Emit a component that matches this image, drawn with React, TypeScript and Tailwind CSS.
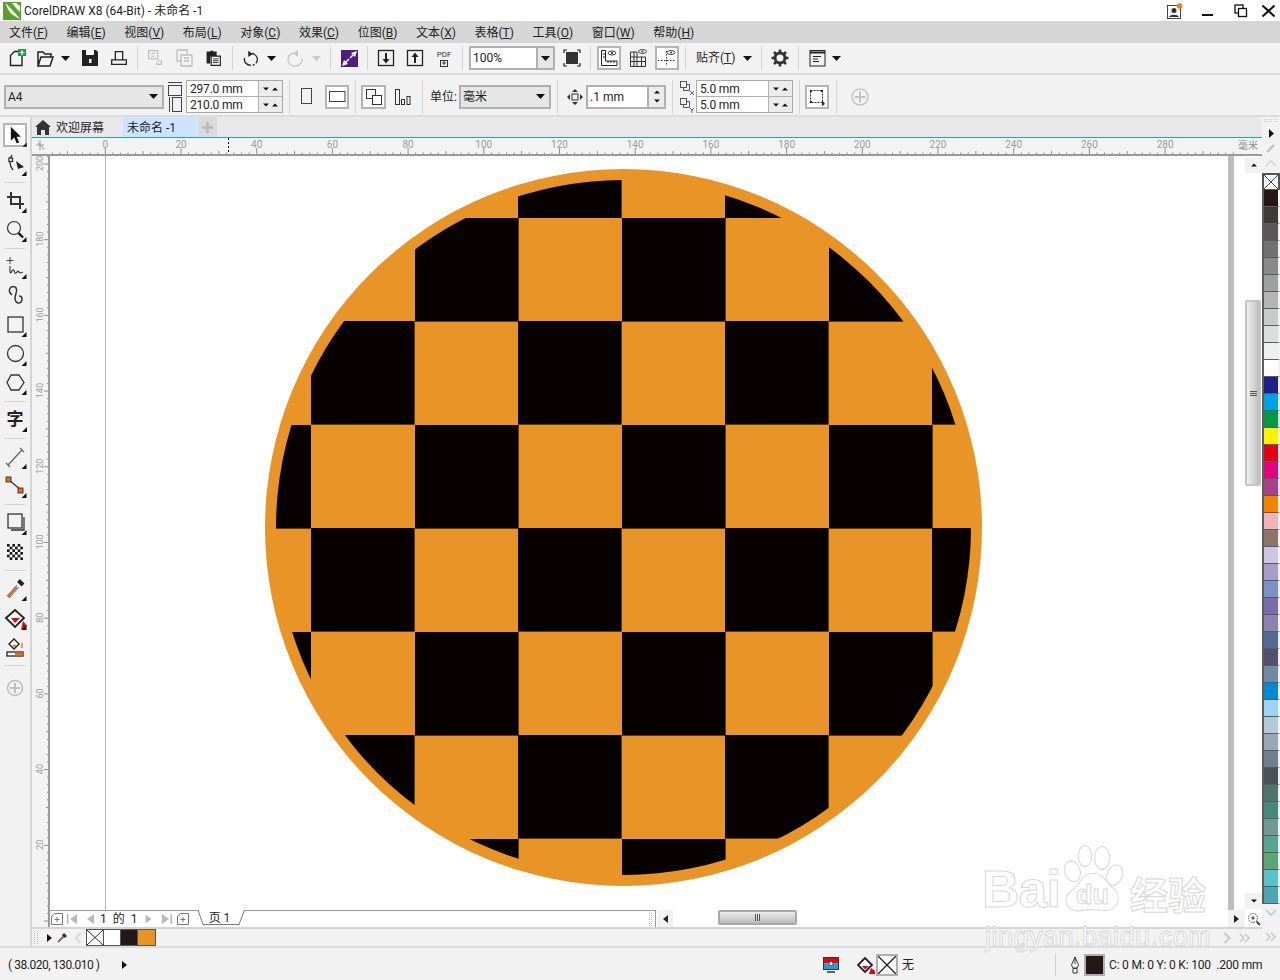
import React from "react";

const FONT = "[font-family:'Roboto','Noto_Sans_CJK_SC',sans-serif]";

const menus = [
  ["文件", "F"],
  ["编辑", "E"],
  ["视图", "V"],
  ["布局", "L"],
  ["对象", "C"],
  ["效果", "C"],
  ["位图", "B"],
  ["文本", "X"],
  ["表格", "T"],
  ["工具", "O"],
  ["窗口", "W"],
  ["帮助", "H"],
];

const palette = [
  "#231815", "#3e3a39", "#595757", "#727171", "#898989", "#9fa0a0", "#b5b5b6", "#c9caca",
  "#dcdddd", "#efefef", "#ffffff", "#1d2088", "#00a0e9", "#009944", "#fff100", "#e60012",
  "#e4007f", "#a84089", "#f08300", "#f5b2b2", "#8c7568", "#ccc7e3", "#a79dc9", "#7a92c8",
  "#7a6ab0", "#8c82ad", "#4f6a94", "#554f6f", "#708aa5", "#0089d4", "#9bd4f5", "#b3c9d7",
  "#98a9b3", "#70808a", "#4a5258", "#4d7570", "#44897b", "#6e9a92", "#55a593", "#5ba673",
  "#5bc0ce", "#4ba7b3",
];

const ORANGE = "#e89427";
const BLACK = "#060001";
const colsX = [311, 415, 518, 622, 725, 829, 932];
const rowsY = [218, 321, 425, 528, 632, 735, 839];

// checker squares, clipped by the inner circle
function Board() {
  const squares: React.ReactNode[] = [];
  for (let r = -1; r < 8; r++) {
    for (let c = -1; c < 8; c++) {
      if ((r + c + 200) % 2 !== 1) continue;
      const x = c < 0 ? 208 : colsX[c];
      const y = r < 0 ? 114 : rowsY[r];
      squares.push(<rect key={`${r}-${c}`} x={x} y={y} width={c < 0 ? 103 : 103.6} height={r < 0 ? 104 : 103.6} fill={BLACK} />);
    }
  }
  return (
    <svg viewBox="50 156 1178 754" className="absolute inset-0 h-[754px] w-[1178px]">
      <line x1="105.5" y1="156" x2="105.5" y2="910" stroke="#b4b4b4" />
      <circle cx="623.5" cy="527.5" r="358.5" fill={ORANGE} />
      <clipPath id="inner">
        <circle cx="623.5" cy="527.5" r="347.5" />
      </clipPath>
      <g clipPath="url(#inner)">{squares}</g>
    </svg>
  );
}

function Cross({ w = 1 }: { w?: number }) {
  return (
    <svg viewBox="0 0 16 16" preserveAspectRatio="none" className="h-full w-full" stroke="#222" strokeWidth={w}>
      <path d="M0 0 L16 16 M16 0 L0 16" />
    </svg>
  );
}

function Caret({ up, color = "#111", className = "" }: { up?: boolean; color?: string; className?: string }) {
  return (
    <svg width="9" height="5" viewBox="0 0 9 5" className={className}>
      <path d={up ? "M0 5 L4.5 0 L9 5 Z" : "M0 0 L9 0 L4.5 5 Z"} fill={color} />
    </svg>
  );
}

function Tiny({ up }: { up?: boolean }) {
  return (
    <svg width="6" height="4" viewBox="0 0 6 4">
      <path d={up ? "M0 3.5 L3 0.5 L6 3.5 Z" : "M0 0.5 L6 0.5 L3 3.5 Z"} fill="#111" />
    </svg>
  );
}

function Slot({ className, children }: { className: string; children?: React.ReactNode }) {
  return <div className={`flex h-full shrink-0 items-center justify-center ${className}`}>{children}</div>;
}

function Sep({ className, tall }: { className: string; tall?: boolean }) {
  return (
    <div className={`flex h-full shrink-0 items-center justify-center ${className}`}>
      <div className={`w-px bg-[#d4d4d4] ${tall ? "h-[34px]" : "h-[24px]"}`} />
    </div>
  );
}

function Ico({ children, size = 24 }: { children: React.ReactNode; size?: number }) {
  return (
    <svg width={size} height={size} viewBox="0 0 24 24" fill="none" stroke="#222" strokeWidth="1.3">
      {children}
    </svg>
  );
}

function Boxed({ className, children }: { className: string; children: React.ReactNode }) {
  return (
    <div className={`flex h-[24px] shrink-0 items-center justify-center border-2 border-[#b4b4b4] bg-white ${className}`}>
      {children}
    </div>
  );
}

function Combo({ className, text }: { className: string; text: string }) {
  return (
    <div className={`flex h-[24px] shrink-0 items-center justify-between border-2 border-[#b0b0b0] bg-[#e6e6e6] pl-[2px] pr-[4px] text-[12px] text-[#222] ${className}`}>
      <span>{text}</span>
      <Caret />
    </div>
  );
}

function DoubleInput({ a, b }: { a: string; b: string }) {
  const row = (v: string) => (
    <div className="flex h-[16px]">
      <div className="flex w-[71px] items-center bg-white pl-[3px] text-[12px] leading-none tracking-[-0.2px] text-[#222]">{v}</div>
      <div className="flex flex-1 items-center justify-around border-l border-[#b0b0b0] bg-[#ececec] px-[3px]">
        <Tiny />
        <Tiny up />
      </div>
    </div>
  );
  return (
    <div className="flex h-[33px] w-[97px] shrink-0 flex-col gap-px border border-[#a8a8a8] bg-[#b0b0b0]">
      {row(a)}
      {row(b)}
    </div>
  );
}

function Tool({ children, corner, className = "" }: { children: React.ReactNode; corner?: boolean; className?: string }) {
  return (
    <div className={`relative flex h-[29px] items-center justify-center ${className}`}>
      <svg width="24" height="24" viewBox="0 0 24 24" fill="none" stroke="#333" strokeWidth="1.3">
        {children}
        {corner && <path d="M23.5 19 V24 H18.5 Z" fill="#111" stroke="none" />}
      </svg>
    </div>
  );
}

function ToolSep() {
  return (
    <div className="flex h-[8px] items-center justify-center">
      <div className="h-px w-[22px] bg-[#d4d4d4]" />
    </div>
  );
}

function Checker() {
  const cells: React.ReactNode[] = [];
  for (let r = 0; r < 6; r++) {
    for (let c = 0; c < 6; c++) {
      if ((r + c) % 2 === 1) cells.push(<rect key={`${r}${c}`} x={4 + c * 2.67} y={4 + r * 2.67} width="2.67" height="2.67" fill="#fff" stroke="none" />);
    }
  }
  return (
    <>
      <rect x="4" y="4" width="16" height="16" fill="#1a1a1a" stroke="none" />
      {cells}
    </>
  );
}

function Toolbox() {
  return (
    <div className="flex h-full w-[32px] shrink-0 flex-col border-r-2 border-[#d4d4d4] pt-[3px]">
      <div className="relative flex h-[29px] items-center justify-center">
        <div className="flex h-[24px] w-[24px] items-center justify-center border-2 border-[#b4b4b4] bg-white">
          <svg width="20" height="20" viewBox="0 0 24 24" className="overflow-visible">
            <path d="M7 2 L7 19 L11 15 L14 22 L17 21 L14 14 L19 14 Z" fill="#111" />
            <path d="M26 21 V26 H21 Z" fill="#111" />
          </svg>
        </div>
      </div>
      <Tool corner>
        <path d="M9 3 C6 7 6 13 10 18" />
        <rect x="6" y="6" width="3.5" height="3.5" fill="#fff" />
        <path d="M13 9 L21 15 L15 17 Z" fill="#222" stroke="none" />
      </Tool>
      <ToolSep />
      <Tool corner>
        <path d="M4 8 H17 V20 M8 3 V15 H21" strokeWidth="2" />
      </Tool>
      <Tool corner>
        <circle cx="11" cy="10" r="6.5" strokeWidth="1.2" />
        <path d="M15.5 15 L20 19.5" strokeWidth="2.4" stroke="#111" />
      </Tool>
      <ToolSep />
      <Tool corner>
        <path d="M7 2 V9 M3.5 5.5 H10.5" strokeWidth="0.9" />
        <path d="M7 11 V17 C8 20 9 14 10.5 15 S11 19 13 18 S14 15 16 17 S18 18 20 17" strokeWidth="1.1" />
      </Tool>
      <Tool>
        <path d="M9 11 C4 7 7 1 12 3 C16 5 12 10 12 14 C12 20 19 21 19 15 C19 13 18 12 16 12" strokeWidth="1.5" />
      </Tool>
      <Tool corner>
        <rect x="5" y="4" width="15" height="15" strokeWidth="1.3" />
      </Tool>
      <Tool corner>
        <circle cx="12.5" cy="11.5" r="8" strokeWidth="1.3" />
      </Tool>
      <Tool corner>
        <path d="M8 4 H16 L21 11.5 L16 19 H8 L4 11.5 Z" strokeWidth="1.3" />
      </Tool>
      <ToolSep />
      <div className="relative flex h-[29px] items-center justify-center text-[17px] font-bold leading-none text-[#222]">
        字
        <svg width="5" height="5" viewBox="0 0 5 5" className="absolute bottom-[2px] right-[3px]">
          <path d="M5 0 V5 H0 Z" fill="#111" />
        </svg>
      </div>
      <ToolSep />
      <Tool corner>
        <path d="M5 20 L19 5" stroke="#666" />
        <path d="M3 18 L7 22 M17 3 L21 7" stroke="#666" />
      </Tool>
      <Tool corner>
        <path d="M6 6 L18 16" stroke="#333" />
        <rect x="3" y="3" width="5" height="5" fill="#f26a11" stroke="#222" strokeWidth="0.8" />
        <rect x="15" y="14" width="5" height="5" fill="#f26a11" stroke="#222" strokeWidth="0.8" />
      </Tool>
      <ToolSep />
      <Tool corner>
        <rect x="5" y="3" width="14" height="14" strokeWidth="1.3" />
        <path d="M21 6 V19 H8" strokeWidth="1.3" />
      </Tool>
      <Tool>
        <Checker />
      </Tool>
      <ToolSep />
      <Tool corner>
        <path d="M15.5 3.5 L20 8" stroke="#222" strokeWidth="4" />
        <path d="M5 20 L14 10" stroke="#e36c1a" strokeWidth="2.2" />
        <path d="M4 19 L14 8 M6 21 L16 10" stroke="#444" strokeWidth="0.7" />
      </Tool>
      <Tool corner>
        <path d="M3 12 L12 4 L21 12 L12 21 Z" fill="#fff" strokeWidth="1.8" stroke="#222" />
        <path d="M8 12 H17 L12 17 Z" fill="#e60012" stroke="none" />
        <path d="M20 15 L24 20 L18 24 Z" fill="#e60012" stroke="none" />
      </Tool>
      <Tool>
        <path d="M6 9 L11 4 L16 9 L11 14 Z" fill="#fff" strokeWidth="1.4" stroke="#222" />
        <path d="M9 10 H14 L11.5 12.5 Z" fill="#e36c1a" stroke="none" />
        <path d="M19 8 V13" stroke="#e36c1a" />
        <rect x="4" y="17" width="16" height="4" fill="#fff" stroke="#222" />
        <rect x="12" y="17.5" width="8" height="3" fill="#e36c1a" stroke="none" />
      </Tool>
      <ToolSep />
      <Tool className="mt-[4px]">
        <circle cx="12" cy="12" r="7.5" stroke="#bdbdbd" strokeWidth="1.6" />
        <path d="M12 7 V17 M7 12 H17" stroke="#bdbdbd" strokeWidth="2" />
      </Tool>
    </div>
  );
}

function TopRuler() {
  const marks: React.ReactNode[] = [];
  for (let v = -14; v <= 300; v += 2) {
    const x = 105.3 + 3.785 * v;
    if (x > 1238) break;
    if (v % 20 === 0) {
      marks.push(<line key={v} x1={x} x2={x} y1="148" y2="154" stroke="#8f8f8f" />);
      marks.push(<text key={`t${v}`} x={x} y="148" textAnchor="middle" fontSize="10" fill="#9c9c9c">{v}</text>);
    } else {
      marks.push(<line key={v} x1={x} x2={x} y1={v % 10 === 0 ? 151 : 152.5} y2="154" stroke="#8f8f8f" />);
    }
  }
  return (
    <div className="relative h-[18px] border-b-2 border-[#9a9a9a] bg-[#f3f3f3]">
      <svg viewBox="32 138 1230 16" className="absolute left-0 top-0 h-[16px] w-[1230px]">
        <path d="M40 140 V150 M36 145 H44 M38 143 L44 149" stroke="#999" fill="none" />
        {marks}
        <line x1="228.5" x2="228.5" y1="138" y2="154" stroke="#111" strokeDasharray="2 2" />
        <text x="1248" y="149" textAnchor="middle" fontSize="10" fill="#8f8f8f">毫米</text>
      </svg>
    </div>
  );
}

function LeftRuler() {
  const marks: React.ReactNode[] = [];
  for (let v = 0; v <= 202; v += 2) {
    const y = 921 - 3.785 * v;
    if (v % 20 === 0) {
      marks.push(<line key={v} y1={y} y2={y} x1="44" x2="49" stroke="#8f8f8f" />);
      if (v > 0)
        marks.push(
          <text key={`t${v}`} x="43" y={y - 0.5} transform={`rotate(-90 43 ${y - 0.5})`} textAnchor="middle" fontSize="9" fill="#9c9c9c">
            {v}
          </text>,
        );
    } else {
      marks.push(<line key={v} y1={y} y2={y} x1={v % 10 === 0 ? 46 : 47} x2="48" stroke="#8f8f8f" />);
    }
  }
  return (
    <div className="h-full w-[18px] shrink-0 border-r-2 border-[#9a9a9a] bg-[#f3f3f3]">
      <svg viewBox="32 156 16 771" className="h-[771px] w-[16px]">
        {marks}
      </svg>
    </div>
  );
}

function NavBtn({ d, color = "#b9b9b9" }: { d: string; color?: string }) {
  return (
    <svg width="14" height="14" viewBox="0 0 14 14">
      <path d={d} fill={color} />
    </svg>
  );
}

function AddPage() {
  return (
    <svg width="14" height="14" viewBox="0 0 14 14" fill="none" stroke="#777">
      <path d="M4.5 1.5 H12.5 V12.5 H1.5 V4.5 Z" />
      <path d="M7 5 V10 M4.5 7.5 H9.5" />
    </svg>
  );
}

function Scroller() {
  return (
    <div className="flex h-full w-[17px] shrink-0 flex-col pt-px">
      <div className="flex h-[16px] items-center justify-center bg-[#f2f2f2]">
        <Tiny up />
      </div>
      <div className="mt-[127px] flex h-[186px] w-[16px] items-center justify-center rounded-[2px] border-2 border-[#c4c4c4] bg-gradient-to-r from-[#f0f0f0] to-[#bdbdbd]">
        <div className="flex w-[7px] flex-col gap-px">
          <div className="h-px bg-[#555]" />
          <div className="h-px bg-[#555]" />
          <div className="h-px bg-[#555]" />
        </div>
      </div>
      <div className="mb-px mt-auto flex h-[16px] items-center justify-center bg-[#f2f2f2]">
        <Tiny />
      </div>
    </div>
  );
}

function PageNav() {
  return (
    <div className="flex h-[17px] bg-white text-[12px] leading-none text-[#222]">
      <div className="flex w-[606px] shrink-0 items-center border-r border-t border-[#9a9a9a]">
        <div className="flex w-[14px] shrink-0 items-center justify-center"><AddPage /></div>
        <Slot className="w-[16px]"><NavBtn d="M2 2 H3.5 V12 H2 Z M12 2 V12 L5 7 Z" /></Slot>
        <Slot className="ml-[1px] w-[17px]"><NavBtn d="M11 2 V12 L4 7 Z" /></Slot>
        <span className="ml-[2px] w-[37px] shrink-0 whitespace-nowrap [word-spacing:3px]">1 的 1</span>
        <Slot className="ml-[6px] w-[12px]"><NavBtn d="M3 2 V12 L10 7 Z" /></Slot>
        <Slot className="ml-[3px] w-[17px]"><NavBtn d="M2 2 V12 L9 7 Z M10.5 2 H12 V12 H10.5 Z" /></Slot>
        <div className="flex w-[15px] shrink-0 items-center justify-center"><AddPage /></div>
        <div className="relative ml-[8px] flex h-full w-[47px] shrink-0 items-center justify-center pr-[4px]">
          <svg width="47" height="16" viewBox="0 0 47 16" className="absolute left-0 top-[-1px]">
            <path d="M0 0 L5 14.5 H41 L46.5 0" fill="#fff" stroke="#777" />
          </svg>
          <span className="relative -mt-[2px]">页 1</span>
        </div>
        <div className="ml-auto mr-[3px] h-[13px] w-[3px] border-x border-dotted border-[#bbb]" />
      </div>
      <div className="ml-px flex w-[16px] shrink-0 items-center justify-center bg-[#f2f2f2]">
        <svg width="5" height="8" viewBox="0 0 5 8"><path d="M5 0 V8 L0 4 Z" fill="#222" /></svg>
      </div>
      <div className="ml-[45px] flex h-[15px] w-[79px] shrink-0 items-center justify-center rounded-[2px] border-2 border-[#a8a8a8] bg-gradient-to-b from-[#ececec] to-[#bcbcbc]">
        <div className="flex h-[7px] gap-px">
          <div className="w-px bg-[#555]" />
          <div className="w-px bg-[#555]" />
          <div className="w-px bg-[#555]" />
        </div>
      </div>
      <div className="ml-auto flex w-[17px] shrink-0 items-center justify-center bg-[#f2f2f2]">
        <svg width="5" height="8" viewBox="0 0 5 8"><path d="M0 0 V8 L5 4 Z" fill="#222" /></svg>
      </div>
      <div className="flex w-[17px] shrink-0 items-center justify-center">
        <svg width="14" height="14" viewBox="0 0 14 14" fill="none" stroke="#444">
          <circle cx="6" cy="6" r="4.5" strokeDasharray="1.5 1" />
          <path d="M9.5 9.5 L13 13" strokeWidth="2" />
          <path d="M6 4 V8 M4 6 H8" />
        </svg>
      </div>
    </div>
  );
}

function DocPalette() {
  return (
    <div className="flex h-[19px] items-center border-t-2 border-[#d4d4d4] bg-[#f2f2f2]">
      <div className="ml-[2px] h-[13px] w-[4px] border-x border-dotted border-[#bbb]" />
      <svg width="5" height="8" viewBox="0 0 5 8" className="ml-[9px]"><path d="M0 0 V8 L5 4 Z" fill="#111" /></svg>
      <svg width="10" height="10" viewBox="0 0 10 10" className="ml-[5px]">
        <path d="M7 3 L1 9" stroke="#8a6a50" strokeWidth="2" />
        <path d="M6 1 L9 4" stroke="#333" strokeWidth="3" />
      </svg>
      <svg width="8" height="12" viewBox="0 0 8 12" fill="none" className="ml-[7px]"><path d="M6.5 1 L1.5 6 L6.5 11" stroke="#d8d8d8" strokeWidth="2" /></svg>
      <div className="ml-[4px] flex h-[17px] border border-[#555]">
        <div className="w-[17px] border-r border-[#555] bg-white"><Cross /></div>
        <div className="w-[17px] border-r border-[#555] bg-white" />
        <div className="w-[17px] border-r border-[#555] bg-[#231815]" />
        <div className="w-[17px] bg-[#e89423]" />
      </div>
      <svg width="8" height="12" viewBox="0 0 8 12" fill="none" className="ml-auto"><path d="M1.5 1 L6.5 6 L1.5 11" stroke="#c8c8c8" strokeWidth="2" /></svg>
      <svg width="12" height="12" viewBox="0 0 12 12" fill="none" className="ml-[8px] mr-[11px]"><path d="M1 2 L5 6 L1 10 M6 2 L10 6 L6 10" stroke="#c8c8c8" strokeWidth="1.5" /></svg>
    </div>
  );
}

function Palette() {
  return (
    <div className="flex h-full w-[18px] shrink-0 flex-col items-center bg-[#f2f2f2]">
      <div className="mt-[2px] h-[3px] w-[14px] border-y border-dotted border-[#ccc]" />
      <svg width="5" height="9" viewBox="0 0 5 9" className="mt-[7px]"><path d="M0 0 V9 L5 4.5 Z" fill="#111" /></svg>
      <svg width="10" height="10" viewBox="0 0 10 10" className="mt-[5px]"><path d="M1 9 L8 2" stroke="#c4c4c4" strokeWidth="2.4" /></svg>
      <svg width="12" height="8" viewBox="0 0 12 8" fill="none" className="mt-[6px]"><path d="M1 7 L6 2 L11 7" stroke="#dcdcdc" strokeWidth="2" /></svg>
      <div className="mt-[6px] h-[17px] w-[18px] shrink-0 border-2 border-b border-[#555] bg-white">
        <Cross />
      </div>
      {palette.map((c) => (
        <div key={c} className="h-[17px] w-[18px] shrink-0 border-x-2 border-b border-[#5c5c5c] border-r-[#f2f2f2]" style={{ backgroundColor: c }} />
      ))}
      <svg width="12" height="8" viewBox="0 0 12 8" fill="none" className="mt-[5px]"><path d="M1 1 L6 6 L11 1" stroke="#c8d0d8" strokeWidth="2" /></svg>
      <svg width="12" height="12" viewBox="0 0 12 12" fill="none" className="mt-[14px]"><path d="M1 2 L5 6 L1 10 M6 2 L10 6 L6 10" stroke="#c8c8c8" strokeWidth="1.5" /></svg>
    </div>
  );
}

function Watermark() {
  return (
    <div className="pointer-events-none absolute left-[975px] top-[835px] h-[120px] w-[245px] font-bold text-white [font-family:'Liberation_Sans','Noto_Sans_CJK_SC',sans-serif] [-webkit-text-stroke:1px_#d8d8d8]">
      <span className="absolute left-[7px] top-[26px] text-[52px] leading-[56px] tracking-[-1px]">Bai</span>
      <svg width="67" height="72" viewBox="0 0 70 72" className="absolute left-[85px] top-[8px]" fill="#fff" stroke="#dcdcdc" strokeWidth="1.2">
        <ellipse cx="13" cy="28" rx="8" ry="11" transform="rotate(-20 13 28)" />
        <ellipse cx="26" cy="12" rx="7" ry="11" />
        <ellipse cx="44" cy="14" rx="8" ry="12" />
        <ellipse cx="57" cy="32" rx="8" ry="11" transform="rotate(20 57 32)" />
        <path d="M35 30 C46 30 48 40 56 46 C66 54 60 70 47 69 C38 68 30 67 22 69 C8 71 0 58 12 48 C22 42 22 30 35 30 Z" />
      </svg>
      <span className="absolute left-[101px] top-[44px] text-[27px] leading-[32px]">du</span>
      <span className="absolute left-[155px] top-[37px] text-[38px] leading-[48px]">经验</span>
      <span className="absolute left-[10px] top-[87px] whitespace-nowrap text-[27px] font-normal leading-[30px] tracking-[0.5px]">jingyan.baidu.com</span>
    </div>
  );
}

export default function App() {
  return (
    <div className={`relative flex h-[980px] w-[1280px] flex-col overflow-hidden bg-[#f2f2f2] text-[#222] ${FONT}`}>
      {/* title */}
      <div className="flex h-[21px] items-center bg-white text-[12px]">
        <svg width="18" height="18" viewBox="0 0 18 18" className="ml-[3px]">
          <rect width="18" height="18" fill="#5aa02c" />
          <path d="M3 1 C6 5 11 9 17 17 C10 14 4 9 3 1 Z M9 1 C11 4 14 7 17 10 V4 L13 1 Z" fill="#fff" />
        </svg>
        <span className="ml-[3px]">CorelDRAW X8 (64-Bit) - 未命名 -1</span>
        <svg width="16" height="16" viewBox="0 0 16 16" className="ml-auto">
          <rect x="0.5" y="2.5" width="13" height="13" fill="#fff" stroke="#444" />
          <circle cx="7" cy="7.5" r="2.5" fill="#333" />
          <path d="M2 14 C3 11 11 11 12 14 Z" fill="#333" />
          <circle cx="12.5" cy="3" r="2.8" fill="#f57b20" />
        </svg>
        <div className="ml-[19px] mt-[8px] h-[2px] w-[11px] bg-[#111]" />
        <svg width="14" height="14" viewBox="0 0 14 14" fill="#fff" stroke="#111" strokeWidth="1.3" className="ml-[21px]">
          <rect x="1" y="1" width="8" height="8" />
          <rect x="4.5" y="4.5" width="8" height="8" />
        </svg>
        <svg width="13" height="12" viewBox="0 0 13 12" stroke="#111" strokeWidth="2" className="ml-[14px] mr-[5px]">
          <path d="M0.5 0.5 L12.5 11.5 M12.5 0.5 L0.5 11.5" />
        </svg>
      </div>

      {/* menu */}
      <div className="flex h-[22px] items-center gap-[18.6px] bg-[#d6d6d6] pl-[9px] pt-[1px] text-[12px]">
        {menus.map(([t, k]) => (
          <span key={t} className="whitespace-nowrap">
            {t}(<u>{k}</u>)
          </span>
        ))}
      </div>

      {/* standard toolbar */}
      <div className="flex h-[32px] items-center border-b-2 border-[#dcdcdc] pl-[2px]">
        <Slot className="w-[28px]">
          <Ico>
            <path d="M10.5 5.5 H18 V19.5 H6.5 V9.5 Z" strokeWidth="1.4" />
            <rect x="14" y="3" width="8" height="7" fill="#1a9c3e" stroke="none" />
            <path d="M18 4 V9 M15.5 6.5 H20.5" stroke="#fff" strokeWidth="1.2" />
          </Ico>
        </Slot>
        <Slot className="w-[29px]">
          <Ico>
            <path d="M5 20 V6 H10 L12 8 H18 V11 M5 20 H17 L20 11 H8 L5 20 Z" strokeWidth="1.5" />
          </Ico>
        </Slot>
        <Slot className="w-[13px]"><Caret /></Slot>
        <Slot className="w-[36px]">
          <Ico>
            <path d="M4 4 H18 L20 6 V20 H4 Z" fill="#222" stroke="none" />
            <rect x="8" y="4" width="8" height="5" fill="#fff" stroke="none" />
            <rect x="11" y="13" width="2.5" height="4" fill="#fff" stroke="none" />
          </Ico>
        </Slot>
        <Slot className="w-[22px]">
          <Ico>
            <path d="M8 14 V5 H16 V14 M4 14 H20 V19 H4 Z" strokeWidth="1.4" />
          </Ico>
        </Slot>
        <Sep className="w-[14px]" />
        <Slot className="w-[22px]">
          <Ico>
            <path d="M5 4 H15 V13 H5 Z M8 7 H12 M8 10 H11" stroke="#bdbdbd" />
            <path d="M15 15 H19 V19 H14 V16" stroke="#bdbdbd" />
          </Ico>
        </Slot>
        <Slot className="w-[36px]">
          <Ico>
            <path d="M5 4 H15 V8 M5 4 V15 H9" stroke="#bdbdbd" />
            <path d="M9 9 H20 V20 H9 Z M12 12 H17 M12 15 H17" stroke="#bdbdbd" />
          </Ico>
        </Slot>
        <Slot className="w-[22px]">
          <Ico>
            <path d="M5 5 H9 V4 H12 V5 H16 V10 H9 V18 H5 Z" fill="#222" stroke="none" />
            <path d="M10 10 H20 V20 H10 Z" fill="#fff" />
            <path d="M12 13 H18 M12 15 H18 M12 17 H18" strokeWidth="1" />
          </Ico>
        </Slot>
        <Sep className="w-[16px]" />
        <Slot className="w-[22px]">
          <Ico>
            <path d="M9 4 L14 7.5 L9 11 Z" fill="#222" stroke="none" />
            <path d="M13 7 C22 9 20 20 12 20 C7 20 4 16 5 12" strokeWidth="1.4" strokeDasharray="14 2 2 2" />
          </Ico>
        </Slot>
        <Slot className="w-[18px]"><Caret /></Slot>
        <Slot className="w-[30px]">
          <Ico>
            <path d="M15 4 L10 7.5 L15 11 Z" fill="#c8c8c8" stroke="none" />
            <path d="M11 7 C2 9 4 20 12 20 C17 20 20 16 19 12" stroke="#c8c8c8" strokeWidth="1.4" />
          </Ico>
        </Slot>
        <Slot className="w-[12px]"><Caret color="#c8c8c8" /></Slot>
        <Sep className="w-[16px]" />
        <Slot className="w-[22px]">
          <svg width="17" height="17" viewBox="0 0 17 17">
            <rect width="17" height="17" fill="#4b1d7d" />
            <path d="M16 1 L10 3 L14 7 Z M1 16 L7 14 L3 10 Z" fill="#fff" />
            <path d="M12 5 L9 8 M5 12 L8 9" stroke="#fff" strokeWidth="1.5" />
          </svg>
        </Slot>
        <Sep className="w-[14px]" />
        <Slot className="w-[24px]">
          <Ico>
            <rect x="4.5" y="4.5" width="15" height="15" />
            <path d="M12 7 V13" strokeWidth="2" />
            <path d="M8.5 13 H15.5 L12 17.5 Z" fill="#222" stroke="none" />
          </Ico>
        </Slot>
        <Slot className="w-[34px]">
          <Ico>
            <rect x="4.5" y="4.5" width="15" height="15" />
            <path d="M12 11 V17" strokeWidth="2" />
            <path d="M8.5 11 H15.5 L12 6.5 Z" fill="#222" stroke="none" />
          </Ico>
        </Slot>
        <Slot className="w-[24px]">
          <div className="flex flex-col items-center">
            <span className="text-[8px] leading-[9px] text-[#333]">PDF</span>
            <svg width="10" height="8" viewBox="0 0 10 8" fill="none" stroke="#333"><rect x="1.5" y="1.5" width="7" height="6" /><path d="M5 2 V6 M3 4 H7" /></svg>
          </div>
        </Slot>
        <Sep className="w-[13px]" />
        <div className="flex h-[24px] w-[86px] shrink-0 border-2 border-[#b0b0b0] bg-white text-[12px]">
          <span className="flex flex-1 items-center pl-[2px]">100%</span>
          <div className="flex w-[17px] items-center justify-center border-l-2 border-[#b0b0b0] bg-[#e6e6e6]"><Caret /></div>
        </div>
        <Slot className="w-[34px]">
          <Ico>
            <path d="M4 7 V4 H7 M17 4 H20 V7 M20 17 V20 H17 M7 20 H4 V17" strokeWidth="1.2" />
            <rect x="6" y="6" width="12" height="12" fill="#333" stroke="none" />
          </Ico>
        </Slot>
        <Sep className="w-[2px]" />
        <Boxed className="ml-[6px] w-[24px]">
          <svg width="20" height="20" viewBox="0 0 20 20" fill="none" stroke="#222">
            <path d="M2.5 2.5 V17.5 H18 V13 H6.5 V2.5 Z" />
            <path d="M9 13 V15 M12 13 V15 M15 13 V15 M4 6 H6 M4 9 H6" />
            <ellipse cx="13" cy="5" rx="4" ry="2" strokeWidth="0.9" />
            <circle cx="13" cy="5" r="1" fill="#222" stroke="none" />
          </svg>
        </Boxed>
        <Slot className="w-[34px]">
          <svg width="18" height="20" viewBox="0 0 18 20" fill="none" stroke="#333">
            <path d="M1.5 4 V18.5 H16.5 V9 H1.5 M1.5 13.5 H16.5 M1.5 4 H8 V18.5 M5 4 V18.5 M12.5 9 V18.5" />
            <ellipse cx="13.5" cy="3.5" rx="4" ry="2" strokeWidth="0.9" />
            <circle cx="13.5" cy="3.5" r="1" fill="#333" stroke="none" />
          </svg>
        </Slot>
        <Boxed className="w-[24px]">
          <svg width="20" height="20" viewBox="0 0 20 20" fill="none" stroke="#333">
            <path d="M9.5 3 V18 M1 12.5 H18" strokeDasharray="1.5 1.5" />
            <ellipse cx="14" cy="4.5" rx="4" ry="2" strokeWidth="0.9" />
            <circle cx="14" cy="4.5" r="1" fill="#333" stroke="none" />
          </svg>
        </Boxed>
        <Sep className="w-[12px]" />
        <Slot className="w-[49px] justify-start pl-[5px] text-[12px]">
          <span className="whitespace-nowrap">贴齐(<u>T</u>)</span>
        </Slot>
        <Slot className="w-[14px]"><Caret /></Slot>
        <Sep className="w-[14px]" />
        <Slot className="w-[24px]">
          <svg width="18" height="18" viewBox="0 0 18 18" fill="none" stroke="#333">
            <circle cx="9" cy="9" r="5" strokeWidth="3" />
            <path d="M9 0.5 V3.5 M9 14.5 V17.5 M0.5 9 H3.5 M14.5 9 H17.5 M3 3 L5 5 M13 13 L15 15 M15 3 L13 5 M3 15 L5 13" strokeWidth="2.6" />
          </svg>
        </Slot>
        <Sep className="w-[12px]" />
        <Slot className="w-[26px]">
          <svg width="17" height="18" viewBox="0 0 17 18" fill="none" stroke="#222">
            <rect x="1" y="1.5" width="15" height="15.5" />
            <path d="M1 3.5 H16" strokeWidth="2" />
            <path d="M4 7.5 H12 M4 10 H9 M4 12.5 H10" />
          </svg>
        </Slot>
        <Slot className="w-[12px]"><Caret /></Slot>
      </div>

      {/* property bar */}
      <div className="flex h-[42px] items-center border-b-2 border-[#dcdcdc] pl-[4px] pt-[3px] text-[12px]">
        <Combo className="w-[160px]" text="A4" />
        <Slot className="w-[22px] flex-col gap-[1px]">
          <svg width="14" height="15" viewBox="0 0 14 15" fill="none" stroke="#444"><path d="M0 1.5 H14" /><rect x="0.5" y="4.5" width="13" height="10" /></svg>
          <svg width="14" height="15" viewBox="0 0 14 15" fill="none" stroke="#444"><path d="M1.5 0 V15" /><rect x="4.5" y="0.5" width="9" height="14" /></svg>
        </Slot>
        <DoubleInput a="297.0 mm" b="210.0 mm" />
        <Sep tall className="w-[12px]" />
        <Slot className="w-[24px]">
          <svg width="12" height="17" viewBox="0 0 12 17" fill="none" stroke="#444"><rect x="0.5" y="0.5" width="10" height="15" /></svg>
        </Slot>
        <Boxed className="ml-[6px] w-[24px]">
          <svg width="17" height="12" viewBox="0 0 17 12" fill="none" stroke="#444"><rect x="0.5" y="0.5" width="15.5" height="10" /></svg>
        </Boxed>
        <Sep tall className="w-[12px]" />
        <Boxed className="w-[25px]">
          <svg width="18" height="18" viewBox="0 0 18 18" fill="none" stroke="#333"><rect x="1.5" y="1.5" width="9" height="9" /><rect x="7.5" y="7.5" width="9" height="9" fill="#fff" /></svg>
        </Boxed>
        <Slot className="w-[34px]">
          <svg width="16" height="16" viewBox="0 0 16 16" fill="none" stroke="#333"><rect x="0.5" y="0.5" width="4" height="15" /><rect x="6.5" y="10.5" width="3" height="5" /><rect x="12" y="7.5" width="3" height="8" /></svg>
        </Slot>
        <Sep tall className="w-[4px]" />
        <Slot className="w-[35px] justify-start pl-[6px]"><span className="whitespace-nowrap">单位:</span></Slot>
        <Combo className="w-[92px]" text="毫米" />
        <Sep tall className="w-[13px]" />
        <Slot className="w-[22px]">
          <svg width="16" height="16" viewBox="0 0 16 16" fill="none" stroke="#333"><rect x="5" y="5" width="6" height="6" /><path d="M8 0 L11 3 H5 Z M8 16 L11 13 H5 Z M0 8 L3 5 V11 Z M16 8 L13 5 V11 Z" fill="#333" stroke="none" /></svg>
        </Slot>
        <div className="flex h-[24px] w-[80px] shrink-0 border-2 border-[#b0b0b0] bg-white">
          <span className="flex flex-1 items-center pl-[2px]">.1 mm</span>
          <div className="flex w-[17px] flex-col items-center justify-center gap-[5px] border-l-2 border-[#b0b0b0] bg-[#ececec]">
            <Tiny up />
            <Tiny />
          </div>
        </div>
        <Sep tall className="w-[12px]" />
        <Slot className="w-[18px] flex-col gap-[2px]">
          <svg width="15" height="15" viewBox="0 0 15 15" fill="none" stroke="#555"><rect x="0.5" y="0.5" width="6" height="6" /><path d="M6.5 3.5 H9.5 V9.5 H3.5 V6.5" /><path d="M10 10 L14 14 M14 10 L10 14" strokeWidth="0.9" /></svg>
          <svg width="15" height="15" viewBox="0 0 15 15" fill="none" stroke="#555"><rect x="0.5" y="0.5" width="6" height="6" /><path d="M6.5 3.5 H9.5 V9.5 H3.5 V6.5" /><path d="M10 10 L12 12 L14 10 M12 12 V15" strokeWidth="0.9" /></svg>
        </Slot>
        <DoubleInput a="5.0 mm" b="5.0 mm" />
        <Sep tall className="w-[12px]" />
        <Boxed className="w-[24px]">
          <svg width="20" height="20" viewBox="0 0 20 20" fill="none" stroke="#333"><rect x="3.5" y="3.5" width="12" height="12" strokeDasharray="2 1" /><path d="M3 3h2v2H3zM14 3h2v2h-2zM3 14h2v2H3z" fill="#222" stroke="none" /><path d="M15 13 V19 L18 17 Z" fill="#222" stroke="none" /></svg>
        </Boxed>
        <Sep tall className="w-[14px]" />
        <Slot className="w-[34px]">
          <svg width="18" height="18" viewBox="0 0 18 18" fill="none" stroke="#c4c4c4"><circle cx="9" cy="9" r="8" strokeWidth="1.5" /><path d="M9 3.5 V14.5 M3.5 9 H14.5" strokeWidth="2" /></svg>
        </Slot>
      </div>

      {/* workspace */}
      <div className="flex h-[829px]">
        <Toolbox />
        <div className="flex min-w-0 flex-1 flex-col">
          <div className="flex h-[21px] border-b border-[#1b9fe0] bg-[#e8e8e8] text-[12px]">
            <div className="flex w-[91px] items-center pl-[3px] pt-px">
              <svg width="16" height="15" viewBox="0 0 16 15"><path d="M8 0 L16 7 H14 V15 H10 V10 H6 V15 H2 V7 H0 Z" fill="#333" /></svg>
              <span className="ml-[5px]">欢迎屏幕</span>
            </div>
            <div className="flex w-[74px] items-center bg-[#cce4ff] pl-[4px] pt-px">未命名 -1</div>
            <div className="ml-px flex w-[19px] items-center justify-center bg-[#dadada]">
              <svg width="11" height="11" viewBox="0 0 11 11"><path d="M5.5 0 V11 M0 5.5 H11" stroke="#b8b8b8" strokeWidth="2.4" /></svg>
            </div>
          </div>
          <TopRuler />
          <div className="flex h-[771px]">
            <LeftRuler />
            <div className="flex min-w-0 flex-1 flex-col">
              <div className="flex h-[754px] bg-white">
                <div className="relative w-[1178px] shrink-0">
                  <Board />
                </div>
                <div className="h-full w-[6px] shrink-0 bg-[#bdbdbd]" />
                <div className="w-[11px] shrink-0" />
                <Scroller />
              </div>
              <PageNav />
            </div>
          </div>
          <DocPalette />
        </div>
        <Palette />
      </div>

      {/* status bar */}
      <div className="flex h-[34px] items-center border-t-2 border-[#dcdcdc] pl-[8px] pt-px text-[12px]">
        <span className="w-[114px] shrink-0 whitespace-nowrap tracking-[-0.45px]">( 38.020, 130.010 )</span>
        <svg width="5" height="8" viewBox="0 0 5 8"><path d="M0 0 V8 L5 4 Z" fill="#111" /></svg>
        <svg width="16" height="16" viewBox="0 0 16 16" className="ml-[696px]">
          <rect x="0.5" y="0.5" width="15" height="12" fill="#fff" stroke="#333" />
          <rect x="1" y="1" width="14" height="5.5" fill="#e60012" />
          <rect x="1" y="6.5" width="14" height="5.5" fill="#1b9fe0" />
          <circle cx="8" cy="6.5" r="2" fill="#fff" stroke="#333" strokeWidth="0.7" />
          <path d="M4 15 H12" stroke="#333" strokeWidth="1.5" />
        </svg>
        <svg width="18" height="18" viewBox="0 0 18 18" className="ml-[18px]">
          <path d="M1 9 L8 2 L15 9 L8 16 Z" fill="#fff" stroke="#222" strokeWidth="1.8" />
          <path d="M5 10 H12 L8 13.5 Z" fill="#e60012" />
          <path d="M14 12 L18 15 V18 H12 Z" fill="#e60012" />
        </svg>
        <div className="ml-px h-[22px] w-[22px] shrink-0 border-2 border-[#b0b0b0] bg-white">
          <Cross w={1.2} />
        </div>
        <span className="ml-[4px]">无</span>
        <div className="ml-[141px] h-[22px] w-px bg-[#d0d0d0]" />
        <svg width="10" height="18" viewBox="0 0 10 18" fill="#fff" stroke="#333" className="ml-[14px]">
          <path d="M5 1 L8.5 9 L7 12 H3 L1.5 9 Z M3 12.5 H7 V17 H3 Z" />
          <path d="M5 1 V8" />
        </svg>
        <div className="ml-[4px] h-[22px] w-[21px] shrink-0 border-2 border-[#b0b0b0] bg-[#231815]" />
        <span className="ml-[4px] whitespace-nowrap tracking-[-0.2px]">C: 0 M: 0 Y: 0 K: 100&nbsp;&nbsp;.200 mm</span>
      </div>

      <Watermark />
    </div>
  );
}
